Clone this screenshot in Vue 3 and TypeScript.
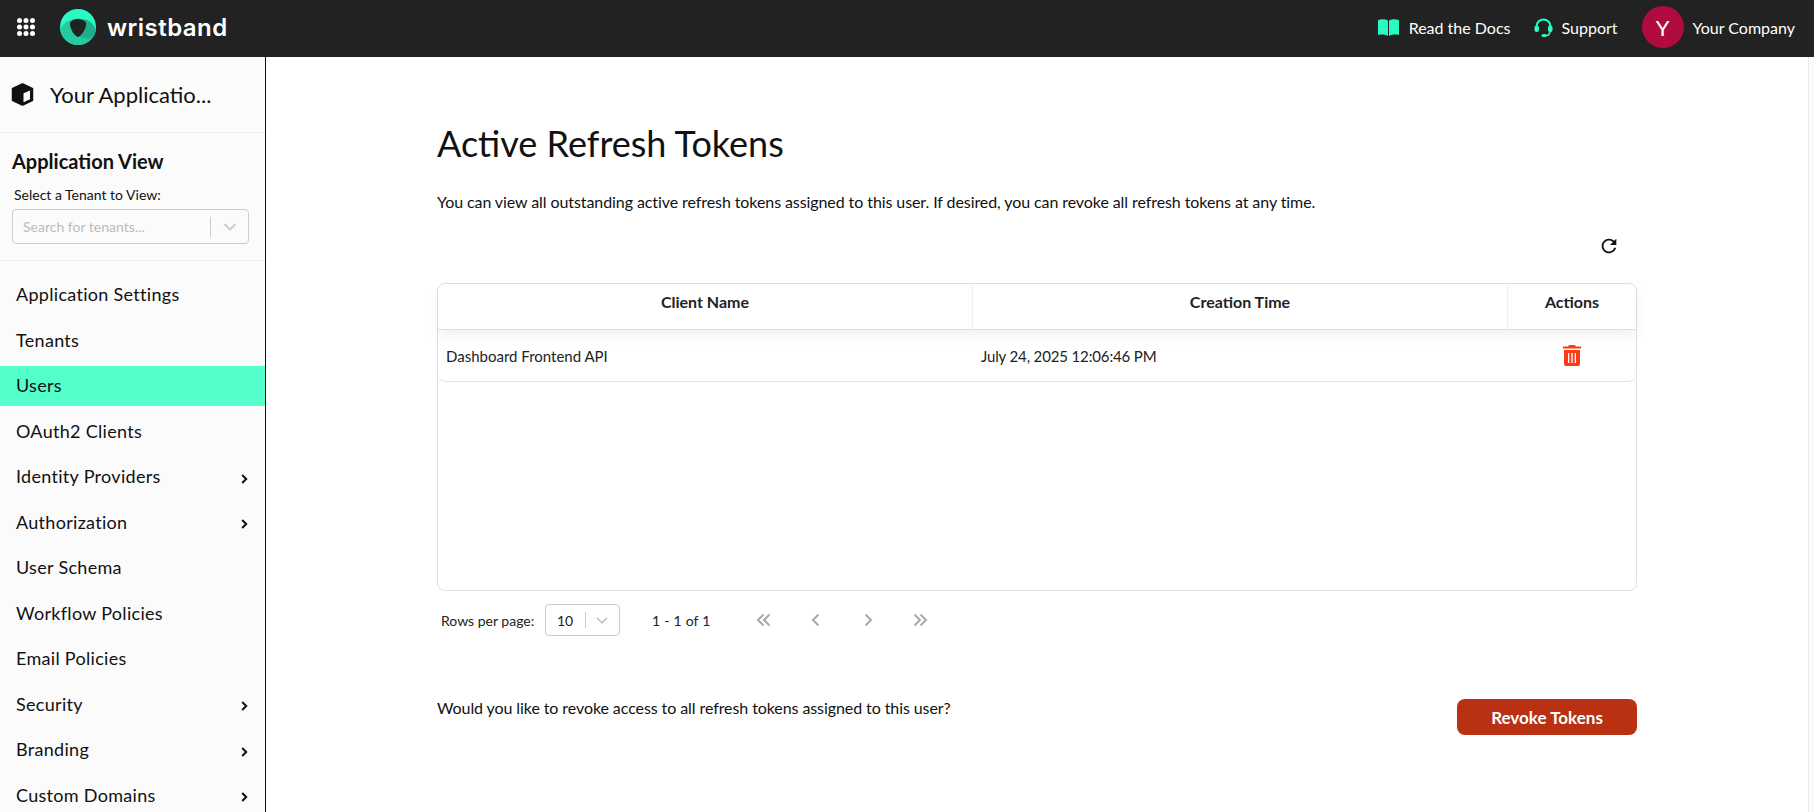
<template>
  <div class="page">
    <!-- top bar -->
    <header class="topbar">
      <div class="brand">
        <svg class="grid-icon" width="18" height="18" viewBox="0 0 18 18" fill="#fff">
          <template v-for="y in [2.5, 9, 15.5]" :key="y">
            <circle v-for="x in [2.5, 9, 15.5]" :key="x" :cx="x" :cy="y" r="2.5" />
          </template>
        </svg>
        <svg class="logo" width="36" height="36" viewBox="0 0 36 36">
          <circle cx="18" cy="18" r="18" fill="#2afac3" />
          <path d="M.3 21C3 13.500 10 9.500 18 9.500S33 13.500 35.700 21C34 29.500 26.800 36 18 36S2 29.500 .3 21z" fill="#26c9a0" />
          <path d="M18 27C24 30 30 30.500 33.700 27.500 34.900 25.800 35.500 23.500 35.700 21 33 13.500 28 11 24 10z" fill="#1fae8a" />
          <path d="M10 13.500C12 11 15 10 18 10S24 11 26 13.500C26.500 19 22.500 25.500 19.200 27.500 18.400 28 17.600 28 16.800 27.500 13.500 25.500 9.500 19 10 13.500z" fill="#222" />
        </svg>
        <span class="wordmark">wristband</span>
      </div>
      <nav class="top-links">
        <a class="top-link docs">
          <svg width="21" height="17" viewBox="0 0 21 17" fill="#2afac3">
            <path d="M0 1.200C3 0 7 0 10 1.500V17C7 15.500 3 15.300 0 16z" />
            <path d="M21 1.200C18 0 14 0 11 1.500V17C14 15.500 18 15.300 21 16z" />
          </svg>
          Read the Docs
        </a>
        <a class="top-link support">
          <svg width="19" height="19" viewBox="0 0 19 19" fill="none" stroke="#2afac3" stroke-width="2">
            <path d="M2.500 10V8.500a7 7 0 0 1 14 0V10" />
            <rect x="0.500" y="7.500" width="4.500" height="6.500" rx="2" fill="#2afac3" stroke="none" />
            <rect x="14" y="7.500" width="4.500" height="6.500" rx="2" fill="#2afac3" stroke="none" />
            <path d="M16 13c0 3-2 4.700-5 4.700" stroke-width="1.600" />
            <rect x="7.500" y="16" width="5" height="3" rx="1.500" fill="#2afac3" stroke="none" />
          </svg>
          Support
        </a>
        <div class="company">
          <span class="avatar">Y</span>
          Your Company
        </div>
      </nav>
    </header>

    <div class="body">
      <!-- side menu -->
      <aside class="sidebar">
        <div class="app-row">
          <svg width="23" height="23" viewBox="0 0 23 23">
            <path d="M11.500 1.500 21 5.800V17.200L11.500 21.500 2 17.200V5.800z" fill="#111" stroke="#111" stroke-width="2.500" stroke-linejoin="round" />
            <path d="M12.500 10.300 19 7.500V16.200L12.500 19.200z" fill="#fbfbfb" />
          </svg>
          <span>Your Applicatio...</span>
        </div>
        <div class="tenant">
          <h3>Application View</h3>
          <label>Select a Tenant to View:</label>
          <div class="select tenant-select">
            <span class="placeholder">Search for tenants...</span>
            <i class="sep"></i>
            <svg width="14" height="8" viewBox="0 0 14 8" fill="none" stroke="#ccc" stroke-width="2"><path d="M1.500 1 7 6.500 12.500 1" /></svg>
          </div>
        </div>
        <ul class="menu">
          <li v-for="item in menu" :key="item.label" :class="{ active: item.active }">
            <span class="label">{{ item.label }}</span>
            <svg v-if="item.sub" class="caret" width="7" height="10" viewBox="0 0 7 10" fill="none" stroke="#111" stroke-width="2"><path d="M1.200 1 5.200 5 1.200 9" /></svg>
          </li>
        </ul>
      </aside>

      <!-- content -->
      <main class="main">
        <div class="content">
          <h1>Active Refresh Tokens</h1>
          <p class="desc">You can view all outstanding active refresh tokens assigned to this user. If desired, you can revoke all refresh tokens at any time.</p>
          <div class="toolbar">
            <svg width="22" height="22" viewBox="0 0 24 24" fill="#111"><path d="M17.650 6.350A7.958 7.958 0 0 0 12 4c-4.420 0-7.990 3.580-7.990 8s3.570 8 7.990 8c3.730 0 6.840-2.550 7.730-6h-2.080A5.990 5.990 0 0 1 12 18c-3.310 0-6-2.690-6-6s2.690-6 6-6c1.660 0 3.140.690 4.220 1.780L13 11h7V4l-2.350 2.350z" /></svg>
          </div>

          <div class="table">
            <div class="thead">
              <div v-for="c in columns" :key="c" class="th">{{ c }}</div>
            </div>
            <div v-for="row in rows" :key="row.client" class="tr">
              <div class="td">{{ row.client }}</div>
              <div class="td date">{{ row.created }}</div>
              <div class="td action">
                <svg width="18" height="21" viewBox="0 0 18 21" fill="#fb3d17">
                  <path d="M6 0h6l.8 1.500H18V3.500H0V1.500h5.200z" />
                  <path fill-rule="evenodd" d="M1 5h16v14a2 2 0 0 1-2 2H3a2 2 0 0 1-2-2zM5 8v10h1.300V8zM8.350 8v10h1.300V8zM11.700 8v10H13V8z" />
                </svg>
              </div>
            </div>
          </div>

          <div class="pager">
            <span class="rows-label">Rows per page:</span>
            <div class="select rows-select">
              <span>10</span>
              <i class="sep"></i>
              <svg width="12" height="7" viewBox="0 0 12 7" fill="none" stroke="#bbb" stroke-width="1.500"><path d="M1 1 6 5.800 11 1" /></svg>
            </div>
            <span class="range">1 - 1 of 1</span>
            <div class="pager-btns">
              <svg v-for="(p, i) in pagerIcons" :key="i" width="16" height="14" viewBox="0 0 16 14" fill="none" stroke="#a9a9a9" stroke-width="2"><path v-for="d in p" :key="d" :d="d" /></svg>
            </div>
          </div>

          <div class="revoke">
            <p>Would you like to revoke access to all refresh tokens assigned to this user?</p>
            <button type="button">Revoke Tokens</button>
          </div>
        </div>
      </main>
      <div class="scroll-track"></div>
    </div>
  </div>
</template>

<script setup lang="ts">
interface MenuItem {
  label: string;
  sub?: boolean;
  active?: boolean;
}

const menu: MenuItem[] = [
  { label: "Application Settings" },
  { label: "Tenants" },
  { label: "Users", active: true },
  { label: "OAuth2 Clients" },
  { label: "Identity Providers", sub: true },
  { label: "Authorization", sub: true },
  { label: "User Schema" },
  { label: "Workflow Policies" },
  { label: "Email Policies" },
  { label: "Security", sub: true },
  { label: "Branding", sub: true },
  { label: "Custom Domains", sub: true },
];

const columns = ["Client Name", "Creation Time", "Actions"];

const rows = [
  { client: "Dashboard Frontend API", created: "July 24, 2025 12:06:46 PM" },
];

const pagerIcons = [
  ["M7.500 1.500 2 7l5.500 5.500", "M13.500 1.500 8 7l5.500 5.500"],
  ["M10.500 1.500 5 7l5.500 5.500"],
  ["M5.500 1.500 11 7l-5.500 5.500"],
  ["M2.500 1.500 8 7l-5.500 5.500", "M8.500 1.500 14 7l-5.500 5.500"],
];
</script>

<style>
html,
body {
  margin: 0;
  height: 100%;
  overflow: hidden;
}
</style>

<style scoped>
.page {
  height: 812px;
  display: flex;
  flex-direction: column;
  font-family: Lato, "Liberation Sans", sans-serif;
  color: #111;
  background: #fff;
  overflow: hidden;
}

.topbar {
  height: 57px;
  flex: none;
  display: flex;
  align-items: center;
  justify-content: space-between;
  background: #222;
  color: #fff;
  padding: 0 19px 3px 17px;
  box-sizing: border-box;
}
.brand {
  display: flex;
  align-items: center;
}
.logo {
  margin-left: 25px;
}
.wordmark {
  margin-left: 11px;
  font-family: Inter, "Liberation Sans", sans-serif;
  font-weight: 600;
  font-size: 24px;
  letter-spacing: 0.45px;
}
.top-links {
  display: flex;
  align-items: center;
  font-size: 16px;
}
.top-link {
  display: flex;
  align-items: center;
  gap: 10px;
}
.docs {
  margin-right: 23px;
}
.support {
  gap: 9px;
  margin-right: 24px;
}
.company {
  display: flex;
  align-items: center;
  gap: 9px;
}
.avatar {
  width: 42px;
  height: 42px;
  border-radius: 50%;
  background: #b00b3e;
  display: flex;
  align-items: center;
  justify-content: center;
  font-size: 22px;
}

.body {
  flex: 1;
  display: flex;
  min-height: 0;
}

.sidebar {
  width: 266px;
  flex: none;
  box-sizing: border-box;
  background: #fbfbfb;
  border-right: 1px solid #111;
  overflow: hidden;
}
.app-row {
  height: 76px;
  box-sizing: border-box;
  border-bottom: 1px solid #ebebeb;
  display: flex;
  align-items: center;
  gap: 16px;
  padding: 0 0 0 11px;
  font-size: 22px;
}
.tenant {
  padding: 16px 12px 0;
  height: 128px;
  box-sizing: border-box;
  border-bottom: 1px solid #ebebeb;
}
.tenant h3 {
  margin: 0;
  font-size: 20px;
  line-height: 24px;
  font-weight: 700;
}
.tenant label {
  display: block;
  margin: 14px 0 0 2px;
  font-size: 14px;
  line-height: 16px;
}
.select {
  display: flex;
  align-items: center;
  box-sizing: border-box;
  border: 1px solid #ccc;
  border-radius: 4px;
  background: #fff;
}
.tenant-select {
  width: 237px;
  height: 35px;
  margin-top: 6px;
  padding: 0 11px 0 10px;
  background: #fbfbfb;
}
.placeholder {
  flex: 1;
  font-size: 14px;
  color: #bbb;
}
.sep {
  width: 1px;
  height: 20px;
  background: #ccc;
  margin-right: 12px;
}

.menu {
  list-style: none;
  margin: 0;
  padding: 14px 0 0;
  display: flex;
  flex-direction: column;
  gap: 5.500px;
}
.menu li {
  height: 40px;
  flex: none;
  display: flex;
  align-items: center;
  justify-content: space-between;
  padding: 0 17px 0 16px;
  font-size: 18px;
  letter-spacing: 0.3px;
}
.menu .label {
  margin-top: -2px;
}
.menu li.active {
  background: #55ffcc;
}
.caret {
  margin-top: 3px;
}

.main {
  flex: 1;
  display: flex;
  justify-content: center;
  min-width: 0;
}
.content {
  width: 1200px;
}
h1 {
  margin: 62px 0 0;
  font-size: 36px;
  line-height: 48px;
  font-weight: 400;
}
.desc,
.revoke p {
  letter-spacing: -0.085px;
}
.desc {
  margin: 24px 0 0;
  font-size: 16px;
  line-height: 22px;
}
.toolbar {
  display: flex;
  justify-content: flex-end;
  margin: 22px 17px 0 0;
  height: 48px;
}

.table {
  height: 308px;
  box-sizing: border-box;
  border: 1px solid #e0e0e0;
  border-radius: 8px;
}
.thead,
.tr {
  display: grid;
  grid-template-columns: 535px 535px 1fr;
  box-sizing: border-box;
}
.thead {
  height: 46px;
  border-bottom: 1px solid #e0e0e0;
  box-shadow: 0 6px 12px rgba(0, 0, 0, 0.06);
}
.th {
  display: flex;
  align-items: center;
  justify-content: center;
  font-weight: 700;
  font-size: 16px;
  color: #222;
  padding-bottom: 10px;
  border-right: 1px solid #eee;
}
.th:last-child {
  border-right: none;
}
.tr {
  height: 52px;
  border-bottom: 1px solid #e0e0e0;
  border-radius: 0 0 8px 8px;
}
.td {
  display: flex;
  align-items: center;
  padding: 0 8px;
  font-size: 15px;
  color: #222;
}
.td.date {
  letter-spacing: -0.14px;
}
.td.action {
  justify-content: center;
}

.pager {
  display: flex;
  align-items: center;
  height: 34px;
  margin-top: 12px;
  font-size: 14px;
  color: #222;
}
.rows-label {
  margin-left: 4px;
  width: 104px;
}
.rows-select {
  width: 75px;
  height: 32px;
  padding: 0 11px;
  font-size: 14px;
}
.rows-select span {
  flex: 1;
}
.rows-select .sep {
  margin-right: 10px;
  height: 16px;
}
.range {
  margin-left: 32px;
  width: 84px;
  word-spacing: 0.5px;
}
.pager-btns {
  display: flex;
  gap: 36px;
  margin-left: 20px;
}

.revoke {
  display: flex;
  justify-content: space-between;
  margin-top: 62px;
}
.revoke p {
  margin: -3px 0 0;
  font-size: 16px;
  line-height: 24px;
}
.revoke button {
  width: 180px;
  height: 36px;
  border: none;
  border-radius: 8px;
  background: #b93112;
  color: #fff;
  font-family: inherit;
  font-size: 17px;
  font-weight: 700;
}

.scroll-track {
  width: 6px;
  flex: none;
  background: #fafafa;
  border-left: 1px solid #e8e8e8;
  box-sizing: border-box;
}
</style>
